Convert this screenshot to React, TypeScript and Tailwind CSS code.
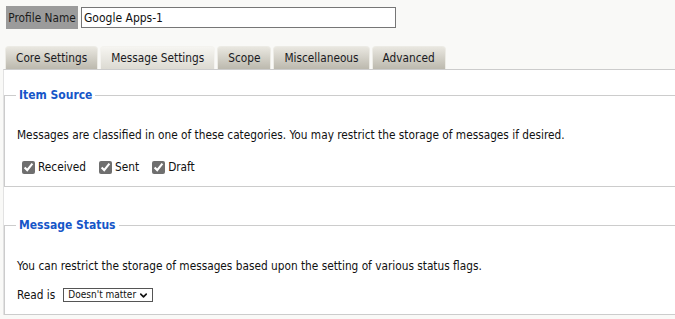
import { ChevronDown } from 'lucide-react'

const tabs = ['Core Settings', 'Message Settings', 'Scope', 'Miscellaneous', 'Advanced']
const activeTab = 'Message Settings'

function Check({ label }: { label: string }) {
  return (
    <label className="flex items-center">
      <input type="checkbox" checked readOnly className="m-0 h-[13px] w-[13px] accent-[#6f6f6f]" />
      <span className="ml-[3px]">{label}</span>
    </label>
  )
}

export default function App() {
  return (
    <div
      className="h-[319px] w-[675px] overflow-hidden bg-[#f9f9f7] text-[11.75px] leading-[16px] text-[#111]"
      style={{ fontFamily: '"DejaVu Sans Condensed", "DejaVu Sans", sans-serif' }}
    >
      {/* profile header */}
      <div className="flex pl-[6px] pt-[6px]">
        <div className="flex h-[23px] w-[72px] items-center justify-center bg-[#9b9b9b] text-[#1b1b1b]">
          Profile Name
        </div>
        <input
          value="Google Apps-1"
          readOnly
          className="ml-[3px] mt-[1px] h-[21px] w-[315px] border border-[#767676] bg-white px-[2px] text-[12px] outline-none"
        />
      </div>

      {/* tabs */}
      <div className="mt-[17px] flex gap-[2px] pl-[5px] text-[11.75px]">
        {tabs.map((t) => (
          <div
            key={t}
            className={`flex h-[23px] items-center rounded-t-[4px] border border-b-0 px-[10px] text-[#1a1a22] ${
              t === activeTab
                ? 'border-[#f4f3ef] bg-gradient-to-b from-[#f6f5f1] to-[#dcdad2]'
                : 'border-[#ecebe5] bg-gradient-to-b from-[#e9e7e0] to-[#bcb9ae]'
            }`}
          >
            {t}
          </div>
        ))}
      </div>

      {/* panel */}
      <div className="ml-[3px] border-l border-t border-l-[#e2e2e2] border-t-[#cccccc] bg-white">
        <fieldset className="-mr-4 mt-[17px] border border-[#cccccc] pb-[11px] pl-[12px]">
          <legend className="-ml-[1px] px-[3px] text-[12px] font-bold text-[#1656c8]">Item Source</legend>
          <p className="mt-[24px]">
            Messages are classified in one of these categories. You may restrict the storage of messages if desired.
          </p>
          <div className="mt-[16px] flex gap-[13px] pl-[5px]">
            <Check label="Received" />
            <Check label="Sent" />
            <Check label="Draft" />
          </div>
        </fieldset>

        <fieldset className="-mr-4 mt-[30px] border border-[#cccccc] pb-[11px] pl-[12px]">
          <legend className="-ml-[1px] px-[3px] text-[12px] font-bold text-[#1656c8]">Message Status</legend>
          <p className="mt-[25px]">
            You can restrict the storage of messages based upon the setting of various status flags.
          </p>
          <div className="mt-[13px] flex items-center">
            <span>Read is</span>
            <div className="ml-[8px] flex h-[14px] w-[90px] items-center justify-between border border-[#555] pl-[4px] pr-[3px] text-[10px] leading-none">
              <span>Doesn't matter</span>
              <ChevronDown size={11} strokeWidth={3.5} />
            </div>
          </div>
        </fieldset>
      </div>
    </div>
  )
}
